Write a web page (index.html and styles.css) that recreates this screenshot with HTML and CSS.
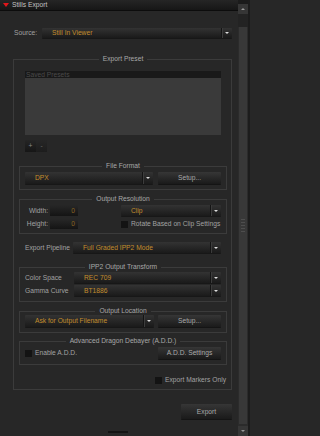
FILE: index.html
```html
<!DOCTYPE html>
<html>
<head>
<meta charset="utf-8">
<link rel="stylesheet" href="styles.css">
</head>
<body>
<div class="window">
  <div class="main">
    <div class="header"><span class="tri"></span><span class="htitle">Stills Export</span></div>
    <div class="content">
      <div class="row source-row">
        <span class="src-label">Source:</span>
        <div class="dropdown"><span class="dd-text">Still In Viewer</span><span class="dd-arrow"></span></div>
      </div>

      <fieldset class="group outer">
        <legend>Export Preset</legend>
        <div class="presets">
          <div class="presets-head">Saved Presets</div>
          <div class="presets-body"></div>
        </div>
        <div class="pm">
          <div class="pm-btn plus">+</div>
          <div class="pm-btn minus">-</div>
        </div>

        <fieldset class="group sub ff">
          <legend>File Format</legend>
          <div class="row r12">
            <div class="dropdown w128"><span class="dd-text">DPX</span><span class="dd-arrow"></span></div>
            <div class="btn setup">Setup...</div>
          </div>
        </fieldset>

        <fieldset class="group sub ores">
          <legend>Output Resolution</legend>
          <div class="res-grid">
            <div class="row r11">
              <span class="res-label">Width:</span>
              <div class="num">0</div>
              <div class="dropdown res-dd"><span class="dd-text">Clip</span><span class="dd-arrow"></span></div>
            </div>
            <div class="row r10">
              <span class="res-label">Height:</span>
              <div class="num">0</div>
              <div class="check-line res-check"><span class="checkbox"></span><span>Rotate Based on Clip Settings</span></div>
            </div>
          </div>
        </fieldset>

        <div class="row r11 pipe">
          <span class="pipe-label">Export Pipeline</span>
          <div class="dropdown"><span class="dd-text">Full Graded IPP2 Mode</span><span class="dd-arrow"></span></div>
        </div>

        <fieldset class="group sub ipp">
          <legend>IPP2 Output Transform</legend>
          <div class="row r11">
            <span class="ipp-label">Color Space</span>
            <div class="dropdown"><span class="dd-text">REC 709</span><span class="dd-arrow"></span></div>
          </div>
          <div class="row r11 gap2">
            <span class="ipp-label">Gamma Curve</span>
            <div class="dropdown"><span class="dd-text">BT1886</span><span class="dd-arrow"></span></div>
          </div>
        </fieldset>

        <fieldset class="group sub oloc">
          <legend>Output Location</legend>
          <div class="row r12">
            <div class="dropdown w129"><span class="dd-text">Ask for Output Filename</span><span class="dd-arrow"></span></div>
            <div class="btn setup">Setup...</div>
          </div>
        </fieldset>

        <fieldset class="group sub add">
          <legend>Advanced Dragon Debayer (A.D.D.)</legend>
          <div class="row r12">
            <div class="check-line"><span class="checkbox"></span><span>Enable A.D.D.</span></div>
            <div class="btn add-btn">A.D.D. Settings</div>
          </div>
        </fieldset>

        <div class="row markers">
          <div class="check-line"><span class="checkbox"></span><span>Export Markers Only</span></div>
        </div>
      </fieldset>

      <div class="row export-row"><div class="btn export">Export</div></div>
      <div class="grip"></div>
    </div>
  </div>
  <div class="scroll">
    <div class="sc-top"></div>
    <div class="sc-btn up"></div>
    <div class="sc-track"></div>
    <div class="sc-thumb"><span class="sc-grip"></span></div>
    <div class="sc-gap"></div>
    <div class="sc-btn down"></div>
  </div>
  <div class="edge"></div>
</div>
</body>
</html>
```

FILE: styles.css
```css
* { box-sizing: border-box; }
html, body { margin: 0; padding: 0; }
body {
  width: 250px;
  height: 436px;
  overflow: hidden;
  background: #272727;
  font-family: "Liberation Sans", Arial, sans-serif;
  font-size: 6.7px;
  line-height: 8px;
  color: #a2a2a2;
}
.window { display: flex; height: 436px; }
.main { width: 238px; display: flex; flex-direction: column; }

.header {
  height: 11px;
  display: flex;
  align-items: center;
  background: linear-gradient(#252525, #161616);
  border-bottom: 1px solid #0c0c0c;
}
.tri {
  width: 0; height: 0;
  border-left: 3px solid transparent;
  border-right: 3px solid transparent;
  border-top: 4px solid #e2161b;
  margin-left: 3px;
}
.htitle { margin-left: 3px; color: #c2c2c2; }

.content { padding: 17px 6px 0 13px; }
.row { display: flex; align-items: stretch; }
.source-row { height: 10px; }
.src-label { width: 29px; padding-left: 1px; display: flex; align-items: center; }

.dropdown {
  flex: 1;
  display: flex;
  min-width: 0;
  background: linear-gradient(#333333, #1a1a1a);
  border-radius: 1px;
  box-shadow: 0 1px 0 #171717;
  color: #c38d2d;
}
.dd-text {
  flex: 1;
  padding-left: 10px;
  display: flex;
  align-items: center;
  white-space: nowrap;
  overflow: hidden;
}
.dd-arrow {
  width: 11px;
  border-left: 1px solid #141414;
  box-shadow: inset 1px 0 0 #3c3c3c;
  display: flex;
  align-items: center;
  justify-content: center;
}
.dd-arrow::after {
  content: "";
  width: 0; height: 0;
  border-left: 2px solid transparent;
  border-right: 2px solid transparent;
  border-top: 2px solid #dcdcdc;
}

.group {
  margin: 0;
  border: 1px solid #3b3b3b;
  min-width: 0;
  padding: 0;
}
.group > legend {
  margin: 0 auto;
  padding: 0 4px;
  line-height: 8px;
  color: #a8a8a8;
}
.group.outer { margin-top: 17px; padding: 0 4px 5px 5px; }

.presets { margin: 8px 6px 0; }
.presets-head {
  height: 7px;
  line-height: 7px;
  background: #191919;
  color: #4a4a4a;
  padding-left: 1px;
}
.presets-body { height: 57px; background: #3a3a3a; }

.pm { margin: 5px 6px 0; display: flex; height: 12px; }
.pm-btn {
  width: 11px;
  display: flex;
  align-items: center;
  justify-content: center;
  color: #8a8a8a;
}
.plus { background: linear-gradient(#252525, #161616); }
.minus { background: linear-gradient(#262626, #1d1d1d); color: #666; }

.r12 { height: 12px; }
.r11 { height: 11px; }
.r10 { height: 10px; }
.gap2 { margin-top: 2px; }

.btn {
  display: flex;
  align-items: center;
  justify-content: center;
  background: linear-gradient(#363636, #1a1a1a);
  border-radius: 1px;
  box-shadow: 0 1px 0 #141414;
  color: #a9a9a9;
}
.setup { width: 63px; margin-left: auto; }
.add-btn { width: 63px; margin-left: auto; }

.group.ff { margin-top: 10px; padding: 2px 5px 5px; }
.w128 { flex: 0 0 128px; }
.w129 { flex: 0 0 129px; }

.group.ores { margin-top: 5px; padding: 2px 5px 4px; }
.res-grid .r10 { margin-top: 3px; }
.res-label {
  width: 25px;
  padding-right: 2px;
  display: flex;
  align-items: center;
  justify-content: flex-end;
}
.num {
  width: 28px;
  background: linear-gradient(#272727, #141414);
  color: #8a6320;
  display: flex;
  align-items: center;
  justify-content: flex-end;
  padding-right: 3px;
}
.res-dd { margin-left: 43px; }
.res-check { margin-left: 43px; }

.check-line { display: flex; align-items: center; gap: 3px; }
.checkbox {
  width: 7px; height: 7px;
  background: #131313;
  flex: 0 0 7px;
}

.pipe { margin: 8px 6px 0; }
.pipe-label { width: 48px; display: flex; align-items: center; white-space: nowrap; }

.group.ipp { margin-top: 10px; padding: 1px 5px 5px; }
.ipp-label { width: 49px; display: flex; align-items: center; white-space: nowrap; }

.group.oloc { margin-top: 5px; padding: 0 5px 5px; }
.group.add { margin-top: 4px; padding: 2px 5px 5px; }

.markers { margin-top: 11px; height: 8px; justify-content: flex-end; padding-right: 1px; }

.export-row { margin-top: 14px; justify-content: flex-end; }
.export { width: 51px; height: 15px; }

.grip { margin: 12px 0 0 95px; width: 20px; height: 2px; background: #141414; }

.scroll {
  width: 10px;
  display: flex;
  flex-direction: column;
  background: #2b2b2b;
}
.sc-top { height: 4px; background: #1b1b1b; }
.sc-btn {
  height: 10px;
  background: #363636;
  display: flex;
  align-items: center;
  justify-content: center;
}
.sc-btn.up::after {
  content: "";
  border-left: 2px solid transparent;
  border-right: 2px solid transparent;
  border-bottom: 2px solid #9a9a9a;
}
.sc-btn.down::after {
  content: "";
  border-left: 2px solid transparent;
  border-right: 2px solid transparent;
  border-top: 2px solid #9a9a9a;
}
.sc-track { height: 13px; background: #232323; }
.sc-thumb {
  height: 397px;
  margin: 0 1px;
  background: #383838;
  display: flex;
  align-items: center;
  justify-content: center;
}
.sc-grip {
  width: 4px;
  height: 14px;
  background: repeating-linear-gradient(#4e4e4e 0 1px, transparent 1px 3px);
}
.sc-gap { height: 2px; }
.edge { width: 2px; background: #1c1c1c; }
```
